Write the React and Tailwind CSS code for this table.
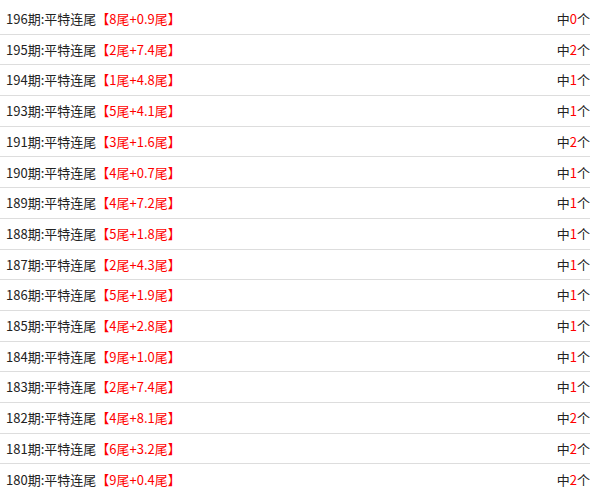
import React from 'react';

const rows = [
  ['196', '8', '0.9', '0'],
  ['195', '2', '7.4', '2'],
  ['194', '1', '4.8', '1'],
  ['193', '5', '4.1', '1'],
  ['191', '3', '1.6', '2'],
  ['190', '4', '0.7', '1'],
  ['189', '4', '7.2', '1'],
  ['188', '5', '1.8', '1'],
  ['187', '2', '4.3', '1'],
  ['186', '5', '1.9', '1'],
  ['185', '4', '2.8', '1'],
  ['184', '9', '1.0', '1'],
  ['183', '2', '7.4', '1'],
  ['182', '4', '8.1', '2'],
  ['181', '6', '3.2', '2'],
  ['180', '9', '0.4', '2'],
];

export default function App() {
  return (
    <div className="w-[596px] h-[500px] bg-white overflow-hidden font-['Microsoft_YaHei','Noto_Sans_CJK_SC',sans-serif] text-[13px] text-[#222]">
      <ul className="w-[590px] pt-[4px]">
        {rows.map(([qi, a, b, hit], i) => (
          <li
            key={qi}
            className={`flex items-center justify-between h-[30.7px] pl-[6px] ${i < rows.length - 1 ? 'border-b border-[#ddd]' : ''}`}
          >
            <span>
              {qi}期:平特连尾
              <span className="text-[#f00]">【{a}尾+{b}尾】</span>
            </span>
            <span>
              中<span className="text-[#f00]">{hit}</span>个
            </span>
          </li>
        ))}
      </ul>
    </div>
  );
}
